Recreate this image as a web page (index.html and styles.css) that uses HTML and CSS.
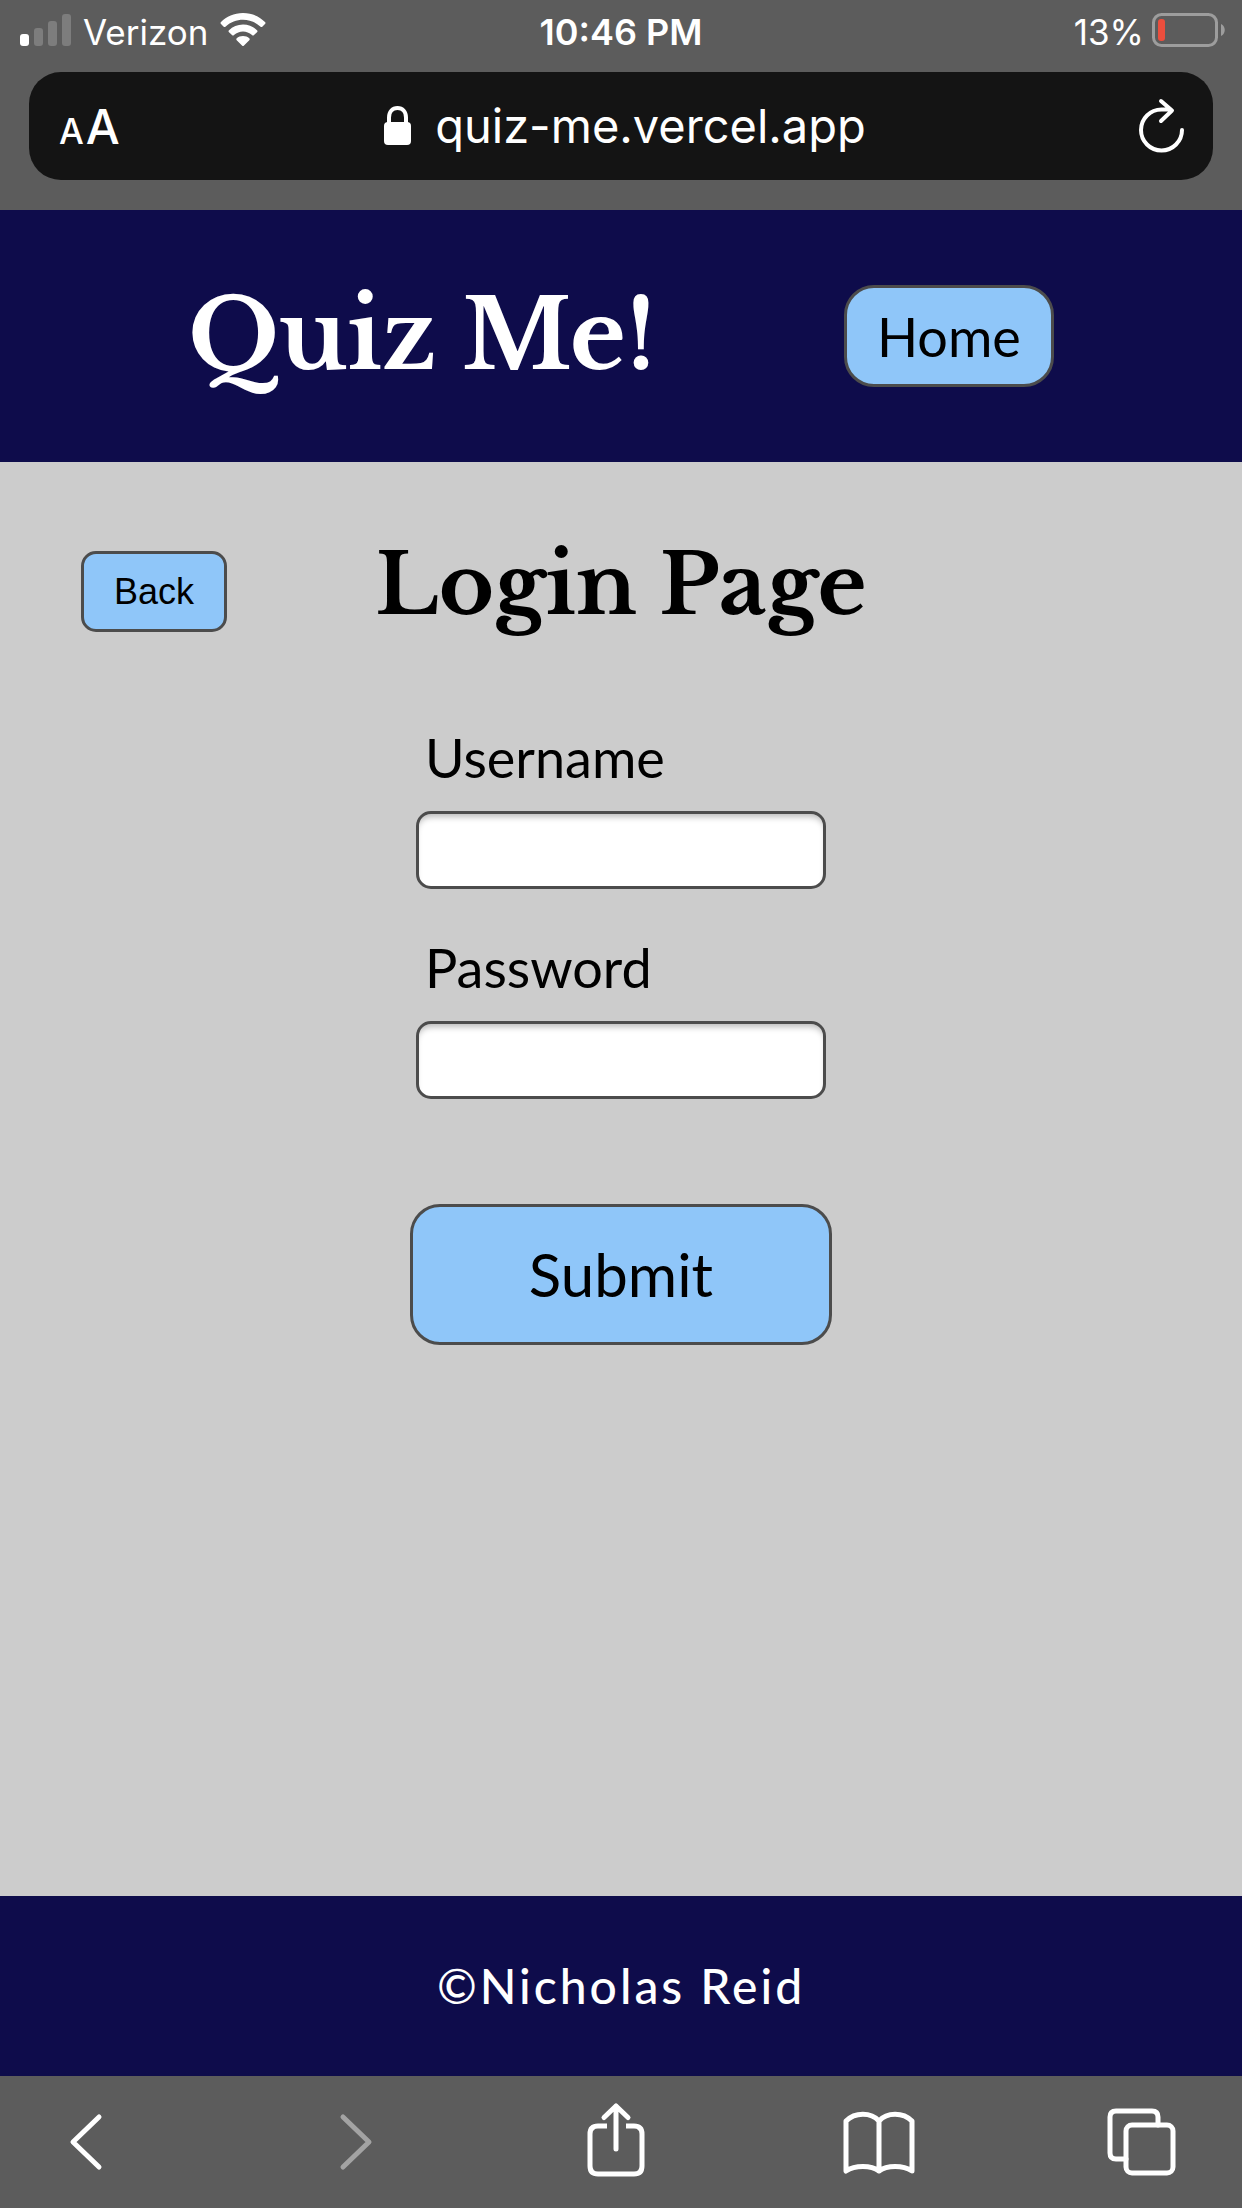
FILE: index.html
```html
<!DOCTYPE html>
<html lang="en">
<head>
  <meta charset="utf-8">
  <meta name="viewport" content="width=device-width, initial-scale=1">
  <title>Quiz Me!</title>
  <link rel="stylesheet" href="styles.css">
</head>
<body>
  <div class="chrome-top">
    <div class="status">
      <div class="status-left">
        <svg class="signal" viewBox="0 0 51 34" aria-label="Signal strength">
          <rect class="on" x="0" y="21" width="9" height="12" rx="3"/>
          <rect class="off" x="14" y="15" width="9" height="18" rx="3"/>
          <rect class="off" x="28" y="8" width="9" height="25" rx="3"/>
          <rect class="off" x="42" y="1" width="9" height="32" rx="3"/>
        </svg>
        <span>Verizon</span>
        <svg class="wifi" viewBox="0 0 46 34" aria-label="Wi-Fi">
          <path d="M23 0C32 0 39.500 3.500 45 9Q46 10 45 11L42.500 13.500Q41.500 14.500 40.300 13.500C35.500 9 29.500 6.700 23 6.700S10.500 9 5.700 13.500Q4.500 14.500 3.500 13.500L1 11Q0 10 1 9C6.500 3.500 14 0 23 0Z"/>
          <path d="M23 11.500C28.500 11.500 33.300 13.600 37 17.200Q38 18.200 37 19.200L34 22Q33 23 32 22C29.300 19.700 26.300 18.500 23 18.500S16.700 19.700 14 22Q13 23 12 22L9 19.200Q8 18.200 9 17.200C12.700 13.600 17.500 11.500 23 11.500Z"/>
          <path d="M23 23C25.600 23 27.600 23.800 29.300 25.200Q30.300 26.200 29.300 27.200L24 32.500Q23 33.500 22 32.500L16.700 27.200Q15.700 26.200 16.700 25.200C18.400 23.800 20.400 23 23 23Z"/>
        </svg>
      </div>
      <time class="clock">10:46 PM</time>
      <div class="status-right">
        <span>13%</span>
        <svg class="battery" viewBox="0 0 74 34" aria-label="Battery">
          <rect class="case" x="1.500" y="1.500" width="63" height="31" rx="8"/>
          <rect class="charge" x="6" y="6" width="7" height="22" rx="3"/>
          <path class="nub" d="M69 11C74 13 74 21 69 23Z"/>
        </svg>
      </div>
    </div>
    <div class="address">
      <button class="text-size" type="button" aria-label="Page settings"><span class="small-a">A</span><span class="large-a">A</span></button>
      <div class="url">
        <svg class="lock" viewBox="0 0 27 40" aria-hidden="true">
          <rect x="0" y="16" width="27" height="23" rx="4"/>
          <path d="M5 18V11.500C5 5.500 8.500 2 13.500 2S22 5.500 22 11.500V18"/>
        </svg>
        <span>quiz-me.vercel.app</span>
      </div>
      <button class="reload" type="button" aria-label="Reload">
        <svg viewBox="0 0 46 56" aria-hidden="true">
          <path d="M43 32A20.500 20.500 0 1 1 22.500 11.500H32M22 3L33 12.500L22 23"/>
        </svg>
      </button>
    </div>
  </div>

  <header class="site-header">
    <h1 class="brand">Quiz Me!</h1>
    <button class="btn home" type="button">Home</button>
  </header>

  <main class="content">
    <div class="title-row">
      <button class="btn back" type="button">Back</button>
      <h2 class="page-title">Login Page</h2>
    </div>
    <form class="login">
      <div class="field">
        <label for="username">Username</label>
        <input id="username" type="text">
      </div>
      <div class="field">
        <label for="password">Password</label>
        <input id="password" type="password">
      </div>
      <button class="btn submit" type="button">Submit</button>
    </form>
  </main>

  <footer class="site-footer">©Nicholas Reid</footer>

  <nav class="toolbar" aria-label="Browser">
    <button type="button" aria-label="Back"><svg viewBox="0 0 80 80"><path d="M53 17L27 42L53 67"/></svg></button>
    <button type="button" aria-label="Forward" class="inactive"><svg viewBox="0 0 80 80"><path d="M33 17L59 42L33 67"/></svg></button>
    <button type="button" aria-label="Share"><svg viewBox="0 0 80 80"><path class="flat" d="M33 26H24Q16 26 16 34V66Q16 74 24 74H60Q68 74 68 66V34Q68 26 60 26H52"/><path d="M42 49V6M30 17.500L42 6L54 17.500"/></svg></button>
    <button type="button" aria-label="Bookmarks"><svg viewBox="0 0 80 80"><path d="M9 71V21C18 12 34 12 42 21C50 12 66 12 75 21V71C66 65 50 65 42 71C34 65 18 65 9 71ZM42 21V71"/></svg></button>
    <button type="button" aria-label="Tabs"><svg viewBox="0 0 80 80"><rect x="25" y="25" width="47" height="48" rx="6"/><path d="M57 25V17Q57 11 51 11H15Q9 11 9 17V53Q9 59 15 59H25"/></svg></button>
  </nav>
</body>
</html>
```

FILE: styles.css
```css
* {
  box-sizing: border-box;
}

body {
  margin: 0;
  min-height: 100vh;
  display: flex;
  flex-direction: column;
  background: #ccc;
  color: #000;
  font-family: Lato, "Liberation Sans", sans-serif;
  font-size: 54px;
}

button {
  margin: 0;
  padding: 0;
  border: 0;
  background: none;
  color: inherit;
  font: inherit;
}

svg {
  display: block;
  flex: none;
}

/* Browser top */
.chrome-top {
  padding-bottom: 30px;
  background: #5c5c5c;
  color: #fff;
  font-family: Inter, "Liberation Sans", sans-serif;
}

.status {
  display: grid;
  grid-template-columns: 1fr auto 1fr;
  align-items: center;
  height: 60px;
  padding: 0 16px;
  font-size: 35px;
}

.status-left,
.status-right {
  display: flex;
  align-items: center;
}

.status-left {
  gap: 12px;
  padding-left: 4px;
}

.status-right {
  justify-content: flex-end;
  gap: 8px;
}

.status span,
.clock {
  padding-top: 3px;
}

.clock {
  font-size: 36px;
  font-weight: 600;
}

.signal {
  width: 51px;
  height: 34px;
}

.signal .on,
.wifi {
  fill: #fff;
}

.signal .off {
  fill: #7d7d7d;
}

.wifi {
  width: 46px;
  height: 34px;
}

.battery {
  width: 74px;
  height: 34px;
}

.battery .case {
  fill: none;
  stroke: #9d9d9d;
  stroke-width: 3;
}

.battery .charge {
  fill: #eb4e3d;
}

.battery .nub {
  fill: #9d9d9d;
}

.address {
  display: grid;
  grid-template-columns: 1fr auto 1fr;
  align-items: center;
  height: 108px;
  margin: 12px 29px 0;
  padding: 0 28px 0 30px;
  border-radius: 32px;
  background: #141414;
}

.text-size {
  display: flex;
  align-items: baseline;
  justify-self: start;
  gap: 2px;
  padding-top: 6px;
  font-weight: 500;
  line-height: 60px;
}

.small-a {
  font-size: 35px;
}

.large-a {
  font-size: 48px;
}

.url {
  display: flex;
  align-items: center;
  gap: 24px;
  padding-left: 6px;
  font-size: 47px;
  line-height: 60px;
}

.lock {
  width: 27px;
  height: 40px;
  fill: #fff;
}

.lock path {
  fill: none;
  stroke: #fff;
  stroke-width: 4;
}

.reload {
  justify-self: end;
}

.reload svg {
  width: 46px;
  height: 56px;
  fill: none;
  stroke: #fff;
  stroke-width: 4;
  stroke-linecap: round;
  stroke-linejoin: round;
}

/* Site */
.btn {
  border: 3px solid #4c4c4c;
  border-radius: 30px;
  background: #8fc6f9;
  color: #000;
}

.site-header {
  display: flex;
  justify-content: space-evenly;
  align-items: center;
  min-height: 252px;
  background: #0e0c4b;
}

.brand,
.page-title {
  margin: 0;
  font-family: "Libre Baskerville", "Liberation Serif", serif;
  font-weight: 700;
}

.brand {
  color: #fff;
  font-size: 96px;
  line-height: 120px;
}

.home {
  padding: 16px 30px 14px;
  line-height: 66px;
}

.content {
  flex: 1;
  padding: 73px 81px;
}

.title-row {
  display: grid;
  grid-template-columns: 1fr auto 1fr;
  align-items: center;
}

.back {
  justify-self: start;
  padding: 17px 30px;
  border-radius: 15px;
  font-family: "Liberation Sans", sans-serif;
  font-size: 36px;
  line-height: 41px;
}

.page-title {
  padding-bottom: 12px;
  font-size: 84px;
  line-height: 100px;
}

.login {
  display: flex;
  flex-direction: column;
  align-items: center;
  gap: 46px;
  margin-top: 78px;
}

.field {
  display: flex;
  flex-direction: column;
  gap: 20px;
  width: 410px;
}

.field label {
  padding-left: 9px;
  line-height: 66px;
}

.field input {
  width: 100%;
  height: 78px;
  padding: 0 15px;
  border: 3px solid #4c4c4c;
  border-radius: 15px;
  background: #fff;
  box-shadow: inset 0 6px 6px -3px #bbb;
  font: inherit;
}

.submit {
  width: 422px;
  margin-top: 59px;
  padding: 30px;
  font-size: 60px;
  line-height: 75px;
}

.site-footer {
  padding: 60px 20px;
  background: #0e0c4b;
  color: #fff;
  font-size: 48px;
  font-weight: 500;
  line-height: 60px;
  letter-spacing: 3px;
  text-align: center;
}

/* Browser bottom */
.toolbar {
  display: flex;
  justify-content: space-between;
  padding: 24px 61px 28px 46px;
  background: #5c5c5c;
}

.toolbar svg {
  width: 80px;
  height: 80px;
  fill: none;
  stroke: #fff;
  stroke-width: 5;
  stroke-linecap: round;
  stroke-linejoin: round;
}

.toolbar .flat {
  stroke-linecap: butt;
}

.toolbar .inactive svg {
  stroke: #a3a3a3;
}
```
